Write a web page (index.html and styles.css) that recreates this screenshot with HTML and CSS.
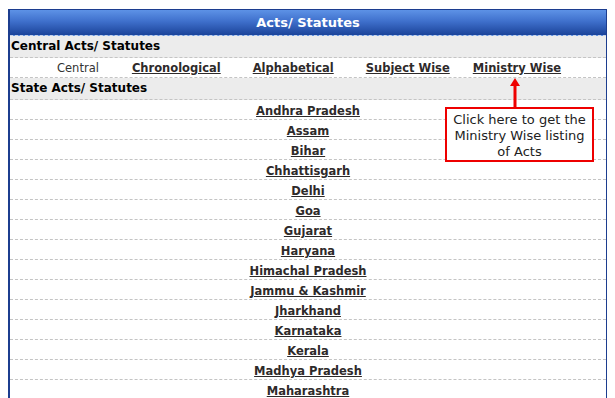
FILE: index.html
```html
<!DOCTYPE html>
<html lang="en">

<head>
    <meta charset="UTF-8">
    <title>Acts/ Statutes</title>
    <link rel="stylesheet" href="styles.css">
</head>

<body>
    <div class="panel">
        <div class="panel-title">Acts/ Statutes</div>
        <div class="section-head">Central Acts/ Statutes</div>
        <div class="central-row">
            <span class="central-label">Central</span>
            <a href="#">Chronological</a>
            <a href="#">Alphabetical</a>
            <a href="#">Subject Wise</a>
            <a href="#" class="ministry">Ministry Wise</a>
        </div>
        <div class="section-head">State Acts/ Statutes</div>
        <div class="state-list">
            <div class="state-row"><a href="#">Andhra Pradesh</a></div>
            <div class="state-row"><a href="#">Assam</a></div>
            <div class="state-row"><a href="#">Bihar</a></div>
            <div class="state-row"><a href="#">Chhattisgarh</a></div>
            <div class="state-row"><a href="#">Delhi</a></div>
            <div class="state-row"><a href="#">Goa</a></div>
            <div class="state-row"><a href="#">Gujarat</a></div>
            <div class="state-row"><a href="#">Haryana</a></div>
            <div class="state-row"><a href="#">Himachal Pradesh</a></div>
            <div class="state-row"><a href="#">Jammu &amp; Kashmir</a></div>
            <div class="state-row"><a href="#">Jharkhand</a></div>
            <div class="state-row"><a href="#">Karnataka</a></div>
            <div class="state-row"><a href="#">Kerala</a></div>
            <div class="state-row"><a href="#">Madhya Pradesh</a></div>
            <div class="state-row"><a href="#">Maharashtra</a></div>
        </div>

        <!-- callout pointing at Ministry Wise -->
        <div class="callout">
            <svg class="callout-arrow" width="12" height="30" viewBox="0 0 12 30">
                <polygon points="6,0 11,8 1,8" fill="#ee0000" />
                <rect x="4.5" y="6" width="3" height="24" fill="#ee0000" />
            </svg>
            Click here to get the<br>Ministry Wise listing<br>of Acts
        </div>
    </div>
</body>

</html>
```

FILE: styles.css
```css
body {
    margin: 8px;
    background-color: #ffffff;
    font-family: "DejaVu Sans", Verdana, sans-serif;
    overflow: hidden;
}

.panel {
    position: relative;
    margin-top: 1px;
    border: 1px solid #1c3d8f;
    border-left-width: 2px;
    border-bottom: none;
}

.panel-title {
    height: 25px;
    line-height: 25px;
    text-align: center;
    color: #ffffff;
    font-weight: bold;
    font-size: 13px;
    background: linear-gradient(to bottom, #5d92e6 0%, #3f70cc 45%, #1b4399 100%);
    border-bottom: 1px dashed #c8d3e8;
}

.section-head {
    height: 21px;
    line-height: 21px;
    padding-left: 1px;
    font-weight: bold;
    font-size: 12px;
    color: #000000;
    background-color: #ececec;
    border-bottom: 1px dashed #c4c4c4;
}

.central-row {
    display: flex;
    align-items: center;
    height: 19px;
    padding-left: 47px;
    font-size: 11.5px;
    border-bottom: 1px dashed #c4c4c4;
}

.central-label {
    color: #333333;
    margin-right: 33px;
}

.central-row a {
    margin-right: 32px;
}

.central-row .ministry {
    margin-left: -9px;
}

a {
    color: #2e2a2a;
    font-weight: bold;
    font-size: 11.5px;
}

.state-row {
    height: 19px;
    line-height: 19px;
    text-align: center;
    border-bottom: 1px dashed #c4c4c4;
}

.callout {
    position: absolute;
    left: 435px;
    top: 97px;
    box-sizing: border-box;
    width: 149px;
    padding-top: 3px;
    border: 2px solid #ee0000;
    background-color: #ffffff;
    text-align: center;
    font-size: 13px;
    line-height: 16px;
    color: #222222;
}

.callout-arrow {
    position: absolute;
    left: 62px;
    top: -31px;
}
```
